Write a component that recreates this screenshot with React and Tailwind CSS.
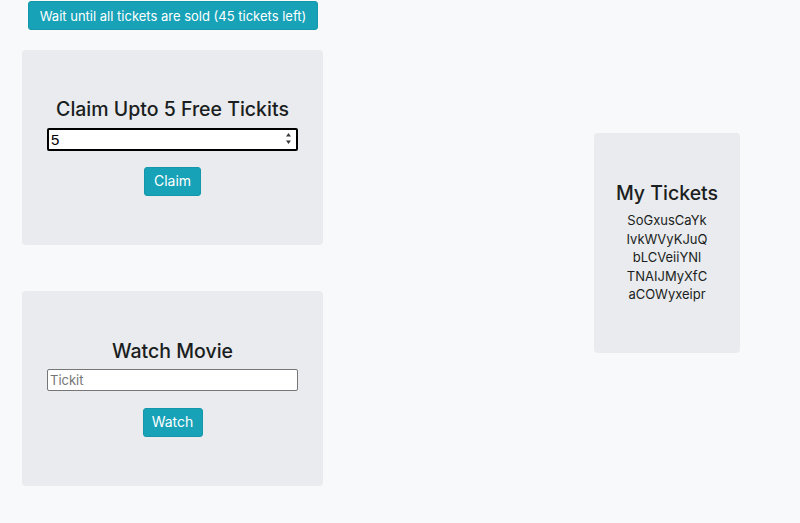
import React from "react";

const font = { fontFamily: "Inter, 'Open Sans', sans-serif" };

const TealButton = ({ children, className = "" }) => (
  <button
    className={`bg-[#17a2b8] text-white leading-[20px] rounded-[3px] border border-[#1497ab] ${className}`}
  >
    {children}
  </button>
);

const Spinner = () => (
  <svg className="absolute right-[6px] top-[4px]" width="7" height="15" viewBox="0 0 7 15">
    <path d="M3.5 2 L6 5.5 L1 5.5 Z" fill="#3a3a3a" />
    <path d="M3.5 13 L6 9.5 L1 9.5 Z" fill="#3a3a3a" />
  </svg>
);

export default function App() {
  return (
    <div className="min-h-screen bg-[#f8f9fa] text-[#1b1e21]" style={font}>
      <div className="pt-[1px] pl-[28px]">
        <TealButton className="h-[29px] w-[290px] text-[13px]">
          Wait until all tickets are sold (45 tickets left)
        </TealButton>
      </div>

      <div className="flex pl-[22px] pr-[60px] mt-[20px]">
        <div className="flex flex-col gap-[46px]">
          {/* claim card */}
          <div className="w-[301px] h-[195px] bg-[#e9ebee] rounded-[4px] flex flex-col items-center justify-center pb-[4px]">
            <h2 className="text-[19.5px] leading-[26px] font-medium">Claim Upto 5 Free Tickits</h2>
            <div className="relative mt-[5px]">
              <input
                readOnly
                value="5"
                className="w-[251px] h-[23px] bg-white border-2 border-black rounded-[2px] px-[2px] text-[15px] text-black outline-none"
                style={{ fontFamily: "'Liberation Sans', Arial, sans-serif" }}
              />
              <Spinner />
            </div>
            <TealButton className="mt-[16px] h-[29px] w-[57px] text-[14px]">Claim</TealButton>
          </div>

          {/* watch card */}
          <div className="w-[301px] h-[195px] bg-[#e9ebee] rounded-[4px] flex flex-col items-center justify-center pb-[3px]">
            <h2 className="text-[19.5px] leading-[26px] font-medium">Watch Movie</h2>
            <input
              placeholder="Tickit"
              className="mt-[5px] w-[251px] h-[22px] bg-white border border-[#767676] rounded-[2px] px-[2px] text-[13px] placeholder:text-[#757575] outline-none"
            />
            <TealButton className="mt-[17px] h-[29px] w-[60px] text-[14px]">Watch</TealButton>
          </div>
        </div>

        <div className="ml-auto mt-[83px]">
          <div className="w-[146px] h-[220px] bg-[#e9ebee] rounded-[4px] flex flex-col items-center pt-[47px]">
            <h2 className="text-[19.5px] leading-[26px] font-medium">My Tickets</h2>
            <ul className="mt-[5px] text-[13px] leading-[18.5px] text-center">
              <li>SoGxusCaYk</li>
              <li>IvkWVyKJuQ</li>
              <li>bLCVeiiYNl</li>
              <li>TNAIJMyXfC</li>
              <li>aCOWyxeipr</li>
            </ul>
          </div>
        </div>
      </div>
    </div>
  );
}
